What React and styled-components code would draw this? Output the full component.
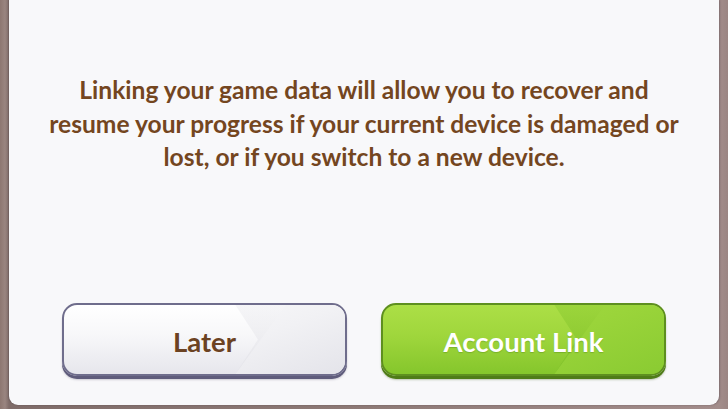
import React from "react";
import styled, { createGlobalStyle, css } from "styled-components";

const Global = createGlobalStyle`
  html, body { margin: 0; padding: 0; }
  body {
    width: 728px;
    height: 409px;
    overflow: hidden;
    font-family: Lato, "Open Sans", "Liberation Sans", sans-serif;
  }
`;

const Scene = styled.div`
  width: 728px;
  height: 409px;
  display: flex;
  align-items: flex-start;
  justify-content: center;
  background: linear-gradient(90deg, #8d7771 0px, #9a8580 5px, #7f6c69 9px, #8e7a76 50%, #a38d8b 719px, #9b8583 728px);
`;

const Panel = styled.div`
  width: 710px;
  height: 405px;
  box-sizing: border-box;
  background: #f8f8fa;
  border-radius: 0 0 9px 9px;
  box-shadow: 1px 0 2px rgba(60, 50, 60, 0.35), -1px 0 1px rgba(60, 50, 60, 0.2);
  display: flex;
  flex-direction: column;
  align-items: center;
`;

const Message = styled.p`
  margin: 73px 0 0;
  color: #74461f;
  font-weight: 700;
  font-size: 24.6px;
  line-height: 33.5px;
  text-align: center;
`;

const ButtonRow = styled.div`
  margin-top: auto;
  margin-bottom: 29px;
  display: flex;
  gap: 34px;
`;

const variants = {
  light: css`
    color: #6b4222;
    border-color: #6f6d8c;
    background: linear-gradient(180deg, #ffffff 0%, #f7f7f9 45%, #e6e6ec 100%);
    box-shadow: 0 3px 0 #5f5c7c, 0 4px 2px rgba(80, 70, 100, 0.25);
    &::before {
      background: linear-gradient(180deg, #ececf0, #dcdce2);
    }
    &::after {
      background: linear-gradient(160deg, #ffffff 0%, #f1f1f4 60%, #e4e4ea 100%);
    }
  `,
  green: css`
    color: #ffffff;
    text-shadow: 0 1px 1px rgba(60, 110, 10, 0.3);
    border-color: #5e8f1f;
    background: linear-gradient(180deg, #acdf46 0%, #9fd63c 45%, #85c62c 100%);
    box-shadow: 0 3px 0 #4f7c18, 0 4px 2px rgba(60, 90, 20, 0.3);
    &::before {
      background: linear-gradient(180deg, #8ccb30, #74b826);
    }
    &::after {
      background: linear-gradient(160deg, #a7dc45 0%, #9ad43a 55%, #8acb32 100%);
    }
  `,
};

const Button = styled.button`
  position: relative;
  overflow: hidden;
  width: 285px;
  height: 73px;
  box-sizing: border-box;
  border: 2px solid;
  border-radius: 15px;
  font-family: Lato, "Open Sans", "Liberation Sans", sans-serif;
  font-weight: 700;
  font-size: 27.5px;
  padding: 3px 0 0;
  cursor: pointer;
  display: flex;
  align-items: center;
  justify-content: center;
  &::before,
  &::after {
    content: "";
    position: absolute;
    inset: 0;
    pointer-events: none;
  }
  &::before {
    clip-path: polygon(61% 0, 100% 0, 100% 100%, 61% 100%, 69% 50%);
    opacity: 0.5;
  }
  &::after {
    clip-path: polygon(79% 0, 100% 0, 100% 100%, 61% 100%);
  }
  ${(p) => variants[p.$variant]}
`;

const Label = styled.span`
  position: relative;
  z-index: 1;
`;

export default function App() {
  return (
    <>
      <Global />
      <Scene>
        <Panel>
          <Message>
            Linking your game data will allow you to recover and
            <br />
            resume your progress if your current device is damaged or
            <br />
            lost, or if you switch to a new device.
          </Message>
          <ButtonRow>
            <Button $variant="light">
              <Label>Later</Label>
            </Button>
            <Button $variant="green">
              <Label>Account Link</Label>
            </Button>
          </ButtonRow>
        </Panel>
      </Scene>
    </>
  );
}
